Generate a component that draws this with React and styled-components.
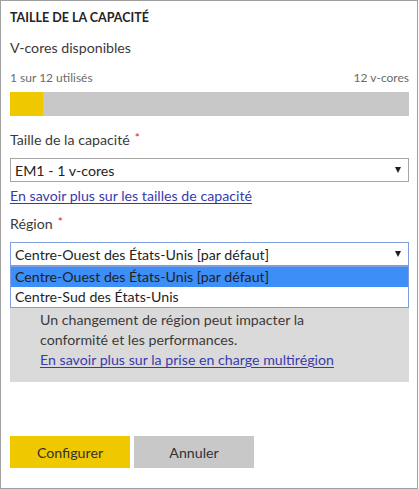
import React from 'react';
import styled, { createGlobalStyle } from 'styled-components';

const GlobalStyle = createGlobalStyle`
  body {
    margin: 0;
    background: #fff;
    font-family: Lato, "Liberation Sans", sans-serif;
  }
`;

const Frame = styled.div`
  box-sizing: border-box;
  width: 418px;
  height: 489px;
  border: 1px solid #a0a0a0;
  padding: 9px 8px 0 9px;
  display: flex;
  flex-direction: column;
  color: #323130;
`;

const Title = styled.h2`
  margin: 0;
  font-size: 12.5px;
  line-height: 16px;
  font-weight: 700;
  color: #252423;
`;

const SubHeading = styled.div`
  margin-top: 12px;
  font-size: 14.2px;
  line-height: 20px;
  color: #3b3a39;
`;

const UsageRow = styled.div`
  margin-top: 12px;
  display: flex;
  justify-content: space-between;
  font-size: 12px;
  line-height: 16px;
  color: #6b6b6b;
`;

const Bar = styled.div`
  margin-top: 6px;
  height: 24px;
  background: #c8c8c8;
  display: flex;
`;

const BarFill = styled.div`
  height: 100%;
  background: #f0c800;
`;

const Label = styled.div`
  margin-top: ${p => p.gap}px;
  font-size: 14.2px;
  line-height: 20px;
  color: #3b3a39;
`;

const Required = styled.span`
  margin-left: 5px;
  color: #e81123;
  font-size: 12px;
  vertical-align: top;
  line-height: 16px;
`;

const SelectWrap = styled.div`
  position: relative;
  margin-top: 8px;
`;

const SelectBox = styled.div`
  box-sizing: border-box;
  height: 24px;
  border: 1px solid ${p => (p.open ? '#7f9fdc' : '#a6a6a6')};
  background: #fff;
  padding: 0 7px 0 4px;
  display: flex;
  align-items: center;
  justify-content: space-between;
  font-size: 14.2px;
  color: #252423;
`;

const Arrow = styled.span`
  width: 0;
  height: 0;
  border-left: 3px solid transparent;
  border-right: 3px solid transparent;
  border-top: 6px solid #1f1f1f;
`;

const OptionList = styled.ul`
  position: absolute;
  top: 100%;
  left: 0;
  right: 0;
  margin: 0;
  padding: 0;
  list-style: none;
  background: #fff;
  border: 1px solid #7f9fdc;
  z-index: 2;
`;

const Option = styled.li`
  height: 20px;
  line-height: 20px;
  padding-left: 4px;
  font-size: 14.2px;
  color: #1f1f1f;
  background: ${p => (p.active ? '#3d8ef7' : '#fff')};
`;

const Link = styled.a`
  display: block;
  margin-top: 4px;
  font-size: 14.2px;
  line-height: 20px;
  color: #3a3aae;
  text-decoration: underline;
  text-underline-offset: 2px;
  cursor: pointer;
`;

const InfoBox = styled.div`
  margin-top: 13px;
  background: #dadada;
  padding: 11px 10px 12px 30px;
`;

const InfoText = styled.p`
  margin: 0;
  max-width: 290px;
  font-size: 14.2px;
  line-height: 20px;
  color: #3b3a39;
`;

const InfoLink = styled(Link)`
  margin-top: 0;
`;

const Actions = styled.div`
  margin-top: 54px;
  display: flex;
  gap: 4px;
`;

const Button = styled.button`
  width: 120px;
  height: 32px;
  border: none;
  padding: 0;
  font-family: Lato, "Liberation Sans", sans-serif;
  font-size: 14.2px;
  color: #323130;
  background: ${p => (p.primary ? '#f0c800' : '#c8c8c8')};
  cursor: pointer;
`;

const usage = { used: 1, total: 12 };
const regions = ['Centre-Ouest des États-Unis [par défaut]', 'Centre-Sud des États-Unis'];

export default function App() {
  return (
    <>
      <GlobalStyle />
      <Frame>
        <Title>TAILLE DE LA CAPACITÉ</Title>
        <SubHeading>V-cores disponibles</SubHeading>
        <UsageRow>
          <span>{usage.used} sur {usage.total} utilisés</span>
          <span>{usage.total} v-cores</span>
        </UsageRow>
        <Bar>
          <BarFill style={{ width: `${(usage.used / usage.total) * 100}%` }} />
        </Bar>

        <Label gap={14}>
          Taille de la capacité<Required>*</Required>
        </Label>
        <SelectWrap>
          <SelectBox>
            <span>EM1 - 1 v-cores</span>
            <Arrow />
          </SelectBox>
        </SelectWrap>
        <Link>En savoir plus sur les tailles de capacité</Link>

        <Label gap={8}>
          Région<Required>*</Required>
        </Label>
        <SelectWrap>
          <SelectBox open>
            <span>{regions[0]}</span>
            <Arrow />
          </SelectBox>
          <OptionList>
            {regions.map((r, i) => (
              <Option key={r} active={i === 0}>{r}</Option>
            ))}
          </OptionList>
        </SelectWrap>

        <InfoBox>
          <InfoText>
            Votre capacité sera créée dans cette région. Un changement de région peut impacter la conformité et les performances.
          </InfoText>
          <InfoLink>En savoir plus sur la prise en charge multirégion</InfoLink>
        </InfoBox>

        <Actions>
          <Button primary>Configurer</Button>
          <Button>Annuler</Button>
        </Actions>
      </Frame>
    </>
  );
}
